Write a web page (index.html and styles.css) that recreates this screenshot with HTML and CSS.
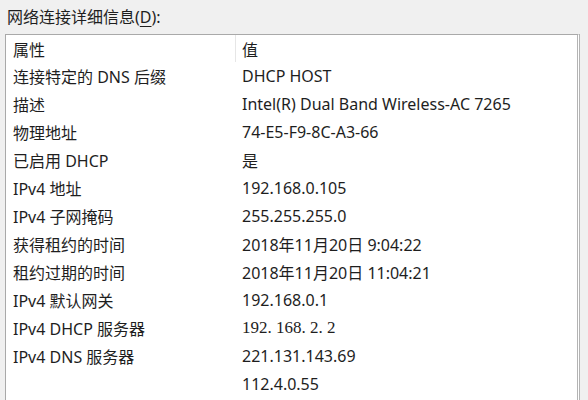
FILE: index.html
```html
<!DOCTYPE html>
<html lang="zh-CN">
<head>
    <meta charset="UTF-8">
    <title>网络连接详细信息</title>
    <link rel="stylesheet" href="styles.css">
</head>
<body>
    <div class="title">网络连接详细信息(<u>D</u>):</div>
    <div class="details-box">
        <div class="header-row">
            <div class="col-prop">属性</div>
            <div class="col-value">值</div>
        </div>
        <div class="row"><div class="col-prop">连接特定的 DNS 后缀</div><div class="col-value">DHCP HOST</div></div>
        <div class="row"><div class="col-prop">描述</div><div class="col-value">Intel(R) Dual Band Wireless-AC 7265</div></div>
        <div class="row"><div class="col-prop">物理地址</div><div class="col-value">74-E5-F9-8C-A3-66</div></div>
        <div class="row"><div class="col-prop">已启用 DHCP</div><div class="col-value">是</div></div>
        <div class="row"><div class="col-prop">IPv4 地址</div><div class="col-value">192.168.0.105</div></div>
        <div class="row"><div class="col-prop">IPv4 子网掩码</div><div class="col-value">255.255.255.0</div></div>
        <div class="row"><div class="col-prop">获得租约的时间</div><div class="col-value">2018年11月20日 9:04:22</div></div>
        <div class="row"><div class="col-prop">租约过期的时间</div><div class="col-value">2018年11月20日 11:04:21</div></div>
        <div class="row"><div class="col-prop">IPv4 默认网关</div><div class="col-value">192.168.0.1</div></div>
        <div class="row"><div class="col-prop">IPv4 DHCP 服务器</div><div class="col-value serif">192. 168. 2. 2</div></div>
        <div class="row"><div class="col-prop">IPv4 DNS 服务器</div><div class="col-value">221.131.143.69</div></div>
        <div class="row"><div class="col-prop"></div><div class="col-value">112.4.0.55</div></div>
    </div>
</body>
</html>
```

FILE: styles.css
```css
/* General styling */
body {
    font-family: "Noto Sans", "Noto Sans CJK SC", sans-serif;
    font-size: 16px;
    color: #1e1e1e;
    background-color: #f0f0f0;
    margin: 0;
    padding: 0;
    height: 400px;
    overflow: hidden;
    display: flex;
    flex-direction: column;
}

.title {
    padding: 5px 0 0 7px;
    height: 34px;
    flex-shrink: 0;
    box-sizing: border-box;
    line-height: 24px;
}

.title u {
    text-underline-offset: 3px;
}

/* List box */
.details-box {
    flex: 1;
    min-height: 0;
    overflow: hidden;
    margin-left: 5px;
    width: 575px;
    box-sizing: border-box;
    background-color: #fff;
    border: 1px solid #a9a9a9;
    border-bottom: none;
    border-right: 3px double #b4b4b4;
}

.header-row,
.row {
    display: grid;
    grid-template-columns: 230px 1fr;
    height: 28px;
    align-items: center;
}

.header-row {
    height: 27px;
    align-items: stretch;
}

.header-row .col-prop {
    border-right: 1px solid #e6e6e6;
}

.header-row > div {
    display: flex;
    align-items: center;
}

.col-prop {
    padding-left: 7px;
    white-space: nowrap;
}

.col-value {
    padding-left: 6px;
    white-space: nowrap;
}

.serif {
    font-family: "Liberation Serif", serif;
    font-size: 17px;
}
```
